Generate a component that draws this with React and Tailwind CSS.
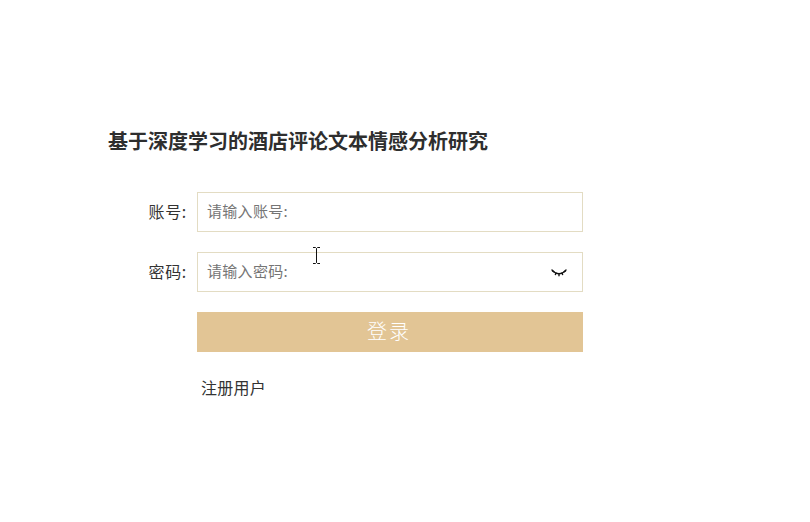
const font = "font-['Noto_Sans_CJK_SC',sans-serif]";

function EyeClosed() {
  return (
    <svg className="mt-[2px]" width="16" height="9" viewBox="0 0 16 9" fill="none" stroke="#111" strokeWidth="1.4" strokeLinecap="round">
      <path d="M1.5 2C4 4 6 4.8 8 4.8S12 4 14.5 2" />
      <path d="M1 1 3 2.8M5 4l-.6 1.6M8 5v1.8M11 4l.6 1.6M15 1 13 2.8" />
    </svg>
  );
}

function TextCursor() {
  return (
    <svg className="absolute left-[312px] top-[247px]" width="9" height="17" viewBox="0 0 9 17" fill="none" stroke="#111" strokeWidth="1">
      <path d="M1 .5h2.5l1 1 1-1H8M4.5 1.5v14M1 16.5h2.5l1-1 1 1H8" />
    </svg>
  );
}

function Field({ label, placeholder, type = 'text', children }) {
  return (
    <div className="flex items-center">
      <label className="mr-[10px] w-[87px] pb-[2px] text-right text-[16px] leading-[38px] tracking-[0.7px] text-[#333]">{label}</label>
      <div className="flex h-10 w-[386px] items-center border border-[#e3dcc3] bg-white pl-[9px] pr-[15px]">
        <input
          type={type}
          placeholder={placeholder}
          className={`${font} mb-[2px] min-w-0 flex-1 bg-transparent text-[15px] tracking-[0.3px] text-[#333] outline-none placeholder:text-[#757575]`}
        />
        {children}
      </div>
    </div>
  );
}

function App() {
  return (
    <div className={`${font} relative h-[522px] w-[810px] overflow-hidden bg-white`}>
      <div className="pl-[108px] pt-[127px]">
        <h1 className="text-[20px] font-bold leading-[28px] text-[#2e2e2e]">基于深度学习的酒店评论文本情感分析研究</h1>
        <div className="-ml-[8px] mt-[37px] flex flex-col gap-5">
          <Field label="账号:" placeholder="请输入账号:" />
          <Field label="密码:" placeholder="请输入密码:" type="password">
            <EyeClosed />
          </Field>
          <div className="pl-[97px]">
            <button className="h-10 w-[386px] bg-[#e2c595] pb-[2px] pr-[2px] text-[20px] font-light tracking-[2px] text-white">登录</button>
            <a className="mt-[23px] block pl-1 text-[16px] leading-6 tracking-[0.25px] text-[#333]">注册用户</a>
          </div>
        </div>
      </div>
      <TextCursor />
    </div>
  );
}

export default App;
